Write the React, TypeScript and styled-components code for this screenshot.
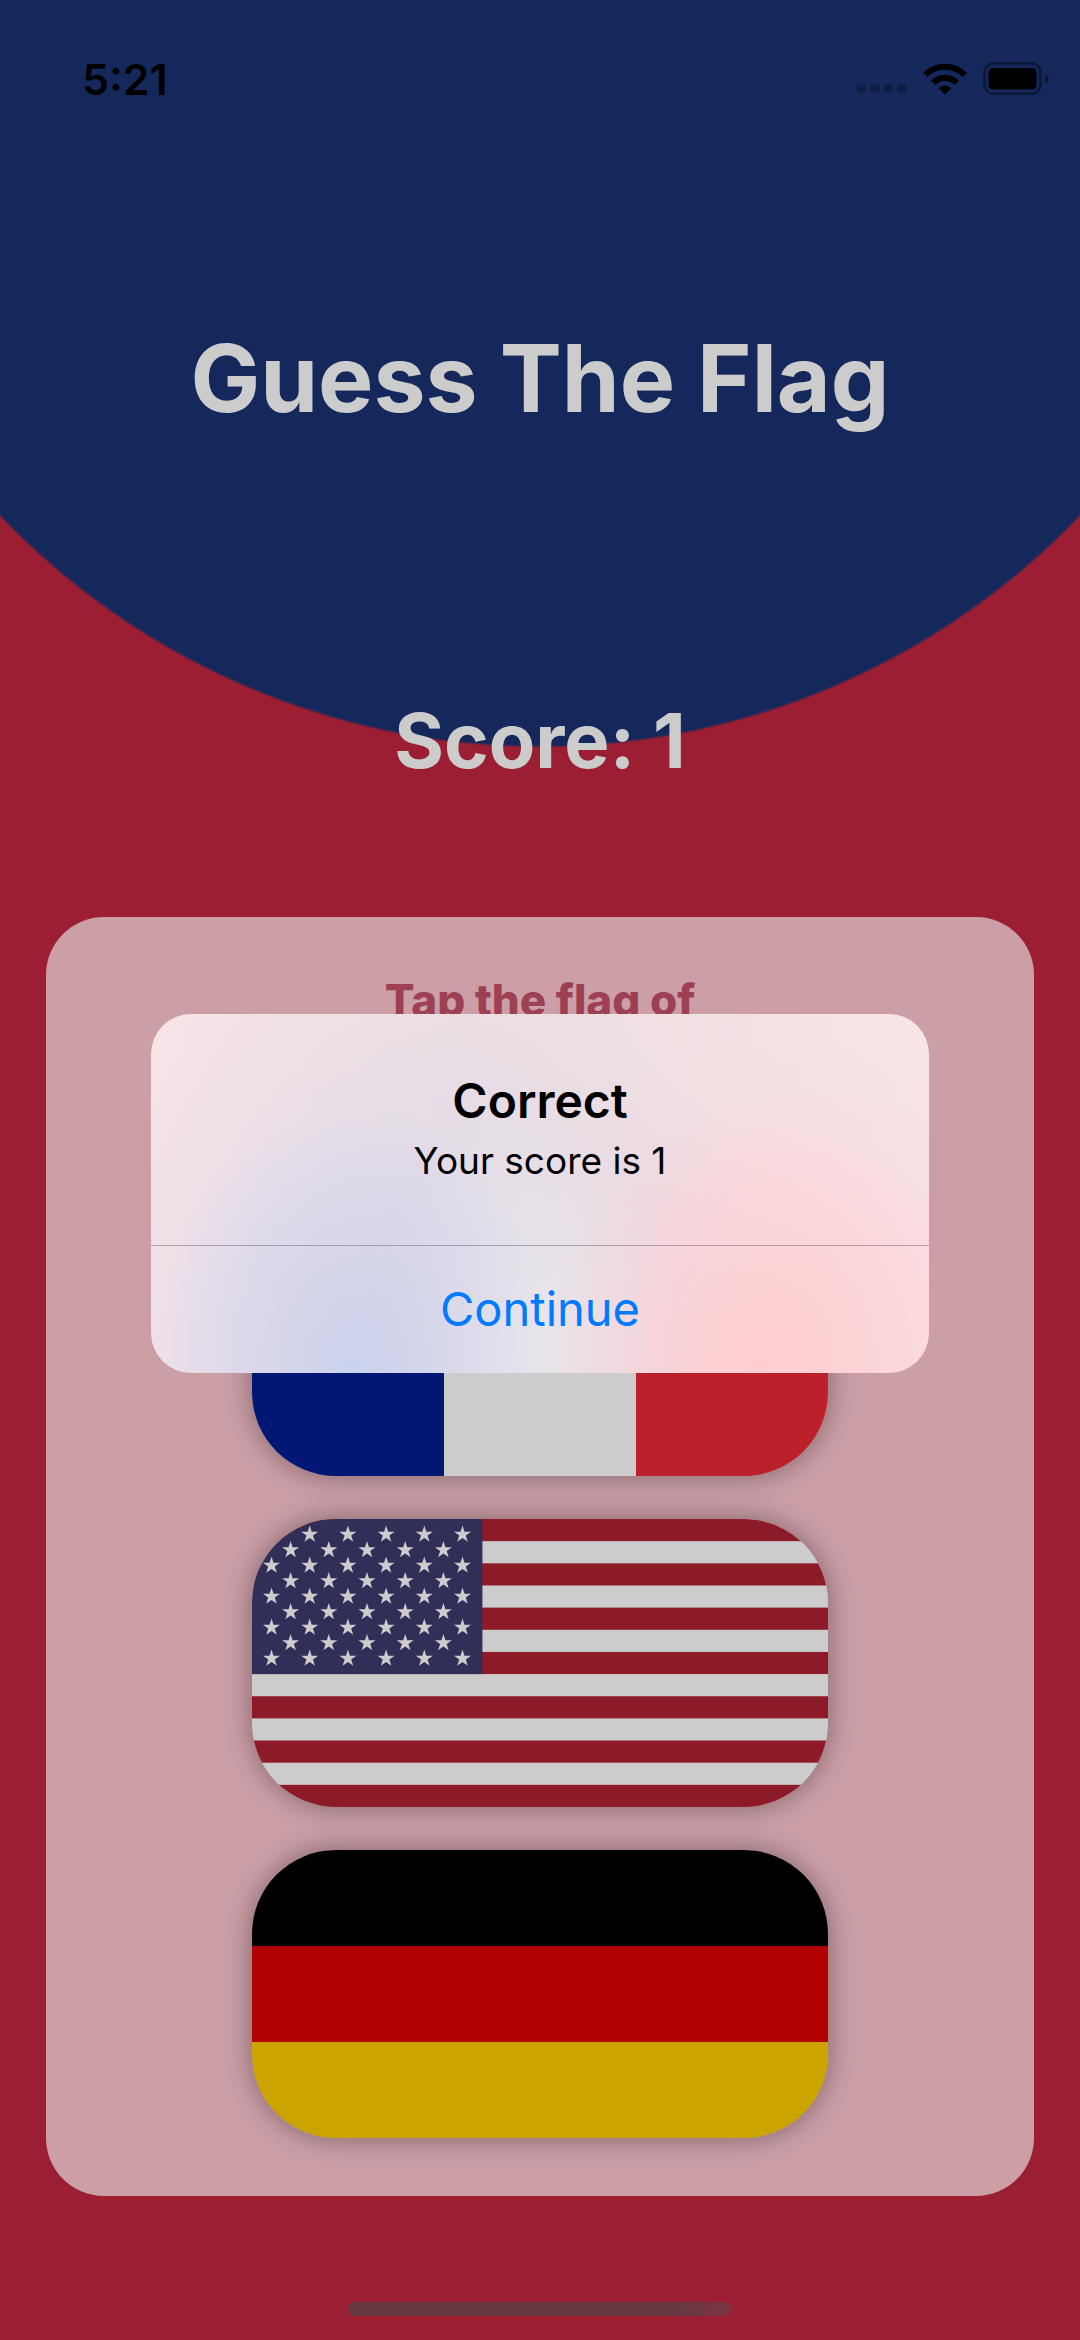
import React from "react";
import styled, { createGlobalStyle } from "styled-components";

const GlobalStyle = createGlobalStyle`
  * { box-sizing: border-box; }
  html, body, #root { min-height: 100%; }
  body {
    margin: 0;
    background: #c2253f;
    font-family: Inter, Roboto, "Liberation Sans", sans-serif;
  }
  h1, h2, p { margin: 0; }
`;

const Screen = styled.div`
  position: relative;
  display: flex;
  flex-direction: column;
  min-height: 100vh;
  overflow: hidden;
  background: radial-gradient(circle at 50% 0, #1a3373 0 745px, #c2263f 748px);
`;

const StatusBar = styled.header`
  display: flex;
  align-items: center;
  justify-content: space-between;
  height: 158px;
  padding: 0 30px 0 82px;
  color: #000;
`;

const Clock = styled.time`
  font-size: 43px;
  line-height: 48px;
  font-weight: 600;
`;

const StatusIcons = styled.div`
  display: flex;
  align-items: center;
  gap: 16px;
`;

const Main = styled.main`
  display: flex;
  flex: 1;
  flex-direction: column;
  align-items: center;
  padding: 0 46px;
  color: #fff;
`;

const Title = styled.h1`
  margin-top: 164px;
  font-size: 93px;
  line-height: 112px;
  font-weight: 700;
`;

const Score = styled.p`
  margin-top: 260px;
  font-size: 76px;
  line-height: 92px;
  font-weight: 700;
`;

const Card = styled.section`
  display: flex;
  flex-direction: column;
  align-items: center;
  width: 100%;
  margin-top: 131px;
  padding: 58px 0;
  border-radius: 58px;
  background: #ffc7d1;
`;

const Prompt = styled.h2`
  font-size: 44px;
  line-height: 50px;
  font-weight: 800;
  color: #c6516a;
`;

const FlagList = styled.div`
  display: flex;
  flex-direction: column;
  gap: 43px;
  margin-top: 163px;
`;

const FlagButton = styled.button`
  display: block;
  width: 576px;
  height: 288px;
  padding: 0;
  border: 0;
  border-radius: 84px;
  overflow: hidden;
  background: none;
  box-shadow: 0 0 28px rgba(0, 0, 0, 0.38);

  svg { display: block; width: 100%; height: 100%; }
`;

const HomeIndicator = styled.div`
  width: 384px;
  height: 14px;
  margin: 106px auto 24px;
  border-radius: 7px;
  background: linear-gradient(90deg, #804850 85%, #9c4152);
`;

const Scrim = styled.div`
  position: absolute;
  inset: 0;
  display: flex;
  align-items: center;
  justify-content: center;
  padding-top: 46px;
  background: rgba(0, 0, 0, 0.2);
`;

const Dialog = styled.div`
  width: 778px;
  max-width: calc(100% - 32px);
  border-radius: 40px;
  overflow: hidden;
  text-align: center;
  color: #000;
  background:
    radial-gradient(ellipse 210px 270px at 26% 100%, #cbd2ed, rgba(205, 210, 236, 0.5) 45%, rgba(208, 212, 236, 0)),
    radial-gradient(ellipse 220px 270px at 78% 100%, #ffcdd0, rgba(255, 206, 209, 0.5) 45%, rgba(255, 208, 211, 0)),
    radial-gradient(ellipse 150px 260px at 49% 95%, #e9e7ec, rgba(233, 231, 236, 0)),
    radial-gradient(ellipse 370px 400px at 34% 85%, rgba(217, 215, 233, 0.9), rgba(232, 224, 232, 0)),
    radial-gradient(ellipse 320px 300px at 80% 90%, rgba(252, 208, 212, 0.8), rgba(250, 218, 221, 0)),
    linear-gradient(90deg, #f8e5e8, #efe0e3 40%, #f0e0e2 60%, #f8e5e8);
`;

const Message = styled.div`
  display: flex;
  flex-direction: column;
  gap: 6px;
  padding: 58px 44px 59px;
`;

const DialogTitle = styled.h2`
  font-size: 48px;
  line-height: 58px;
  font-weight: 600;
`;

const DialogText = styled.p`
  font-size: 37px;
  line-height: 50px;
`;

const DialogButton = styled.button`
  display: block;
  width: 100%;
  height: 128px;
  padding: 0;
  border: 0;
  border-top: 1px solid rgba(60, 40, 70, 0.34);
  background: none;
  font: inherit;
  font-size: 47px;
  line-height: 58px;
  color: #007aff;
`;

const SignalIcon = () => (
  <svg width="50" height="32" viewBox="0 0 50 32" fill="#000" opacity="0.25" aria-hidden="true">
    {[0, 13.5, 27, 40.5].map((x) => (
      <rect key={x} x={x} y="21" width="9" height="9" rx="3" />
    ))}
  </svg>
);

const WifiIcon = () => (
  <svg width="44" height="32" viewBox="0 0 44 32" fill="none" stroke="#000" strokeWidth="6.2" aria-hidden="true">
    <path d="M2.4 11.9A27.7 27.7 0 0 1 41.6 11.9" />
    <path d="M10.2 19.7A16.7 16.7 0 0 1 33.8 19.7" />
    <path d="M15.6 25.1A9 9 0 0 1 28.4 25.1L22 31.6Z" fill="#000" stroke="none" />
  </svg>
);

const BatteryIcon = () => (
  <svg width="67" height="34" viewBox="0 0 67 34" aria-hidden="true">
    <rect x="1.4" y="1.4" width="56.2" height="30.2" rx="9" fill="none" stroke="#000" strokeOpacity="0.4" strokeWidth="2.6" />
    <rect x="5.5" y="6" width="48" height="21.5" rx="4.5" />
    <path d="M62 11.5C67 13.5 67 20 62 22Z" fillOpacity="0.45" />
  </svg>
);

const FranceFlag = () => (
  <svg viewBox="0 0 576 288" aria-hidden="true">
    <rect width="192" height="288" fill="#001f92" />
    <rect x="192" width="192" height="288" fill="#fff" />
    <rect x="384" width="192" height="288" fill="#ea2836" />
  </svg>
);

const STAR = "M0-9 2.02-2.78 8.56-2.78 3.27 1.06 5.29 7.28 0 3.44-5.29 7.28-3.27 1.06-8.56-2.78-2.02-2.78Z";
const STRIPE = 288 / 13;

const stars = Array.from({ length: 9 }, (_, row) =>
  Array.from({ length: row % 2 ? 5 : 6 }, (_, col) => ({
    x: 19.5 + col * 38.2 + (row % 2 ? 19.1 : 0),
    y: 15.5 + row * 15.5,
  })),
).flat();

const UsaFlag = () => (
  <svg viewBox="0 0 576 288" aria-hidden="true">
    <rect width="576" height="288" fill="#fff" />
    {[0, 2, 4, 6, 8, 10, 12].map((i) => (
      <rect key={i} y={i * STRIPE} width="576" height={STRIPE} fill="#b02131" />
    ))}
    <rect width="230.4" height={STRIPE * 7} fill="#3c3b6e" />
    {stars.map(({ x, y }) => (
      <path key={`${x}-${y}`} d={STAR} transform={`translate(${x} ${y})`} fill="#fff" />
    ))}
  </svg>
);

const GermanyFlag = () => (
  <svg viewBox="0 0 576 288" aria-hidden="true">
    <rect width="576" height="96" fill="#000" />
    <rect y="96" width="576" height="96" fill="#dc0000" />
    <rect y="192" width="576" height="96" fill="#ffcd00" />
  </svg>
);

export default function App() {
  return (
    <>
      <GlobalStyle />
      <Screen>
        <StatusBar>
          <Clock>5:21</Clock>
          <StatusIcons>
            <SignalIcon />
            <WifiIcon />
            <BatteryIcon />
          </StatusIcons>
        </StatusBar>
        <Main>
          <Title>Guess The Flag</Title>
          <Score>Score: 1</Score>
          <Card>
            <Prompt>Tap the flag of</Prompt>
            <FlagList>
              <FlagButton aria-label="France"><FranceFlag /></FlagButton>
              <FlagButton aria-label="United States"><UsaFlag /></FlagButton>
              <FlagButton aria-label="Germany"><GermanyFlag /></FlagButton>
            </FlagList>
          </Card>
        </Main>
        <HomeIndicator />
        <Scrim>
          <Dialog role="alertdialog" aria-modal="true" aria-labelledby="alert-title" aria-describedby="alert-text">
            <Message>
              <DialogTitle id="alert-title">Correct</DialogTitle>
              <DialogText id="alert-text">Your score is 1</DialogText>
            </Message>
            <DialogButton>Continue</DialogButton>
          </Dialog>
        </Scrim>
      </Screen>
    </>
  );
}
